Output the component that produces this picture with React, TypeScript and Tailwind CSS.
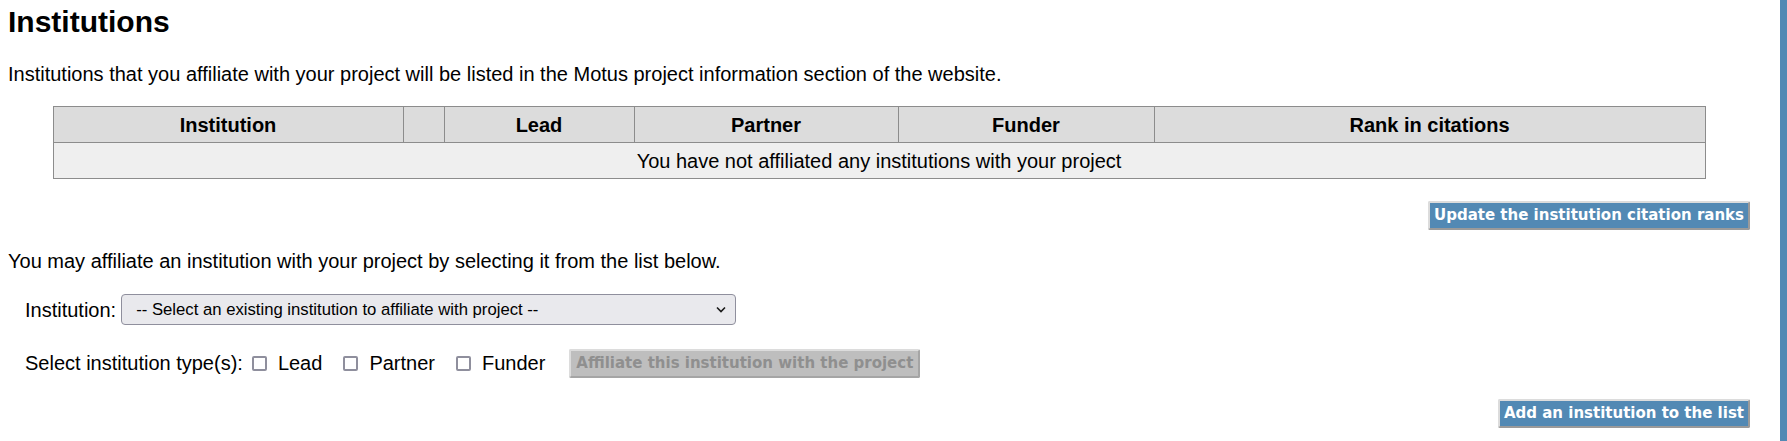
import { useState } from "react";

function App() {
  const columns = [
    { label: "Institution", width: "w-[350px]" },
    { label: "", width: "w-[41px]" },
    { label: "Lead", width: "w-[190px]" },
    { label: "Partner", width: "w-[264px]" },
    { label: "Funder", width: "w-[256px]" },
    { label: "Rank in citations", width: "" },
  ];

  const [types, setTypes] = useState<Record<string, boolean>>({
    Lead: false,
    Partner: false,
    Funder: false,
  });

  const toggleType = (name: string): void => {
    setTypes({ ...types, [name]: !types[name] });
  };

  const btn =
    "bg-[#5289b4] text-white font-bold text-[15px] font-['DejaVu_Sans',sans-serif] px-[4px] h-[29px] border-2 border-t-[#dcdcdc] border-l-[#dcdcdc] border-r-[#9a9a9a] border-b-[#9a9a9a] rounded-[2px]";

  return (
    <div className="flex min-h-[441px] bg-white text-black font-['Liberation_Sans',Arial,sans-serif]">
      <div className="flex-1 pl-2 pr-[30px]">
        <h1 className="text-[30px] font-bold leading-[34px] mt-[5px]">Institutions</h1>
        <p className="text-[20px] leading-[23px] mt-[24px]">
          Institutions that you affiliate with your project will be listed in the Motus project information section of the website.
        </p>

        <table className="w-[1653px] mx-auto mt-[20px] border-collapse table-fixed text-[20px]">
          <thead>
            <tr className="bg-[#dcdcdc] h-[36px]">
              {columns.map((col, index) => (
                <th key={index} className={`${col.width} border border-[#8c8c8c] font-bold text-center`}>
                  {col.label}
                </th>
              ))}
            </tr>
          </thead>
          <tbody>
            <tr className="bg-[#efefef] h-[36px]">
              <td colSpan={6} className="border border-[#8c8c8c] text-center">
                You have not affiliated any institutions with your project
              </td>
            </tr>
          </tbody>
        </table>

        <div className="flex justify-end mt-[22px]">
          <button className={btn}>Update the institution citation ranks</button>
        </div>

        <p className="text-[20px] leading-[23px] mt-[20px]">
          You may affiliate an institution with your project by selecting it from the list below.
        </p>

        <div className="flex items-center gap-[5px] pl-[17px] mt-[21px]">
          <label className="text-[20px]">Institution:</label>
          <div className="relative">
            <select className="appearance-none w-[615px] h-[31px] bg-[#e9e9ed] border border-[#8f8f9d] rounded-[4px] pl-[14px] text-[16.7px] text-black font-['Liberation_Sans',Arial,sans-serif]">
              <option>-- Select an existing institution to affiliate with project --</option>
            </select>
            <svg
              className="absolute right-[9px] top-[11px] pointer-events-none"
              width="12"
              height="9"
              viewBox="0 0 12 9"
              fill="none"
              stroke="#1a1a1a"
              strokeWidth="1.6"
            >
              <path d="M2 2.5 L6 6.5 L10 2.5" />
            </svg>
          </div>
        </div>

        <div className="flex items-center pl-[17px] mt-[23px] text-[20px]">
          <span>Select institution type(s):</span>
          {["Lead", "Partner", "Funder"].map((name, index) => (
            <label
              key={name}
              className={`flex items-center gap-[11px] ${index === 0 ? "ml-[9px]" : "ml-[21px]"}`}
            >
              <input
                type="checkbox"
                checked={types[name]}
                onChange={() => toggleType(name)}
                className="appearance-none w-[15px] h-[15px] border-2 border-[#8f8f9d] rounded-[2px] bg-white"
              />
              {name}
            </label>
          ))}
          <button
            disabled
            className="ml-[24px] bg-[#bebebe] text-[#8f8f8f] font-bold text-[15px] font-['DejaVu_Sans',sans-serif] px-[5px] h-[29px] border-2 border-t-[#dcdcdc] border-l-[#dcdcdc] border-r-[#a5a5a5] border-b-[#a5a5a5] rounded-[2px]"
          >
            Affiliate this institution with the project
          </button>
        </div>

        <div className="flex justify-end mt-[21px]">
          <button className={btn}>Add an institution to the list</button>
        </div>
      </div>
      <div className="w-[7px] bg-[#5289b4]" />
    </div>
  );
}

export default App;
